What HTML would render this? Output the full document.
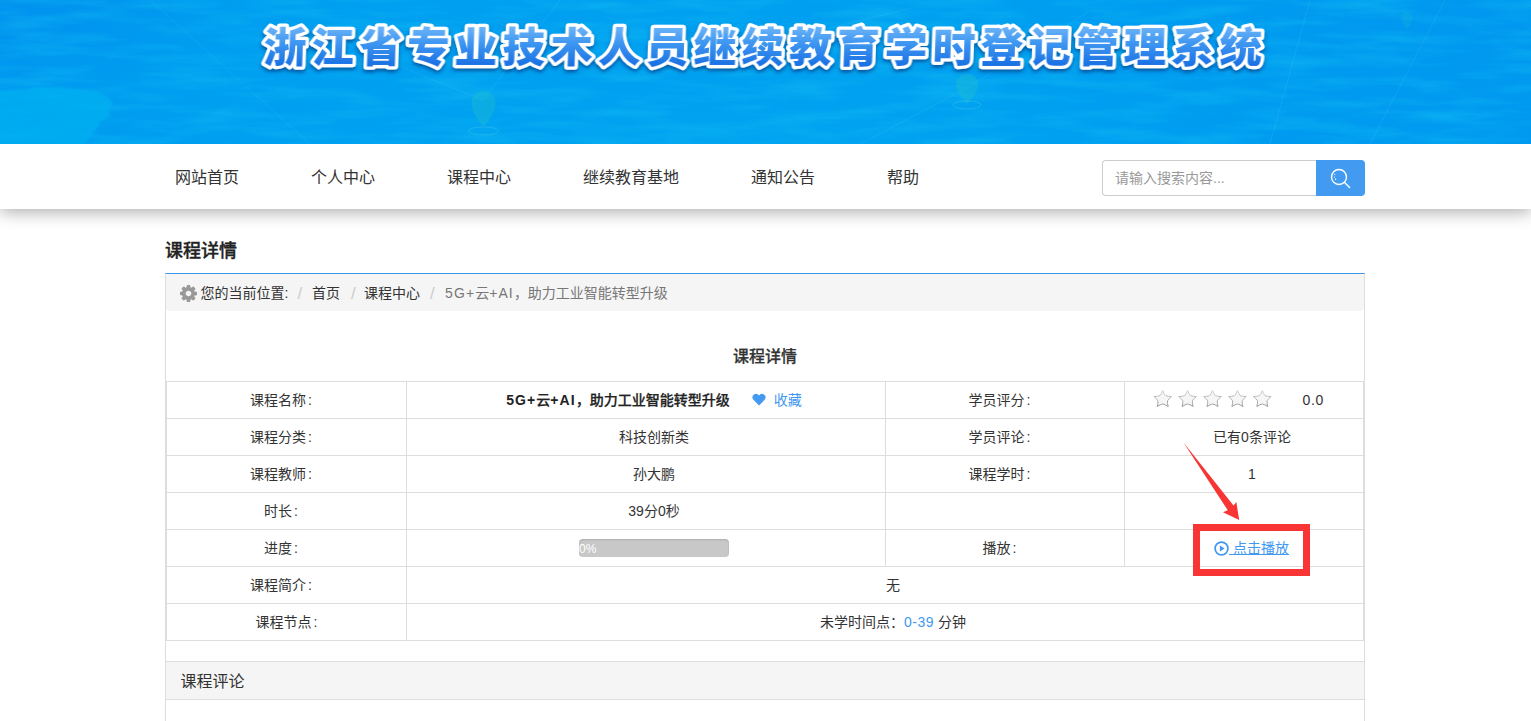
<!DOCTYPE html>
<html lang="zh-CN">
<head>
<meta charset="utf-8">
<title>课程详情</title>
<style>
*{box-sizing:border-box;margin:0;padding:0}
html,body{width:1531px;height:721px;overflow:hidden;background:#fff}
body{font-family:"Liberation Sans","Noto Sans CJK SC",sans-serif;font-size:14px;color:#333;position:relative}
.abs{position:absolute}
#banner{left:0;top:0;width:1531px;height:144px;overflow:hidden;
 background:
  radial-gradient(ellipse 520px 90px at 740px 150px,rgba(0,178,240,.3),rgba(0,178,240,0) 100%),
  radial-gradient(ellipse 300px 90px at 0px 0px,rgba(0,135,238,.45),rgba(0,135,238,0) 100%),
  radial-gradient(ellipse 420px 120px at 1531px 0px,rgba(0,140,238,.2),rgba(0,140,238,0) 100%),
  linear-gradient(90deg,#0099f0 0%,#009ff0 14%,#009ff0 60%,#009bf0 85%,#0099f0 100%);}
#banner svg{position:absolute;left:0;top:0}
#nav{left:0;top:144px;width:1531px;height:65px;background:#fff;box-shadow:0 3px 16px rgba(0,0,0,.33);clip-path:inset(0 0 -40px 0)}
#nav a{position:absolute;top:0;line-height:68px;font-size:16px;color:#333;text-decoration:none;white-space:nowrap}
#search{left:1102px;top:160px;width:215px;height:36px;border:1px solid #ccc;border-right:none;border-radius:4px 0 0 4px;background:#fff;
 font-size:14px;color:#999;line-height:35px;padding-left:12px}
#sbtn{left:1316px;top:160px;width:49px;height:36px;background:#429bf0;border-radius:0 4px 4px 0}
h1{left:165px;top:239px;font-size:18px;line-height:24px;font-weight:500;-webkit-text-stroke:.35px #222;color:#222}
#panel{left:165px;top:273px;width:1200px;height:460px;border:1px solid #ddd;border-top:1px solid #3a95e8}
#crumb{left:166px;top:274px;width:1198px;height:37px;background:#f5f5f5;border-radius:4px;font-size:14px;line-height:37px;color:#333;white-space:nowrap}
#crumb span{position:absolute;top:1px}
i.ls{font-style:normal;letter-spacing:1.1px}
td b{font-weight:500;-webkit-text-stroke:.25px #222}
td b i.ls{font-weight:700;-webkit-text-stroke:0}
#crumb .sep{color:#ccc;font-size:17px;top:1px}
h2{left:165px;top:345px;width:1200px;text-align:center;font-size:16px;line-height:24px;font-weight:500;-webkit-text-stroke:.25px #333;color:#333}
table{left:166px;top:381px;width:1197px;border-collapse:collapse;table-layout:fixed;font-size:14px}
td{border:1px solid #ddd;height:37px;text-align:center;vertical-align:middle;padding:0;line-height:20px;color:#333;white-space:nowrap}
td.l{padding-right:11px}
i.c{font-style:normal;margin-left:2px}
td.v{padding-left:16px}
.blue{color:#4098f0}
#cmt{left:166px;top:661px;width:1198px;height:39px;background:#f5f5f5;border-top:1px solid #ddd;border-bottom:1px solid #ddd;font-size:16px;line-height:40px;padding-left:14.5px;color:#333}
.bar{display:inline-block;position:relative;top:-1px;width:150px;height:18px;background:#c8c8c8;border-radius:4px;box-shadow:inset 0 1px 2px rgba(0,0,0,.14);vertical-align:middle;text-align:left;color:#fff;font-size:12px;line-height:21px;padding-left:0;overflow:hidden}
#redbox{left:1193px;top:524px;width:117px;height:52px;border:7px solid #f83434}
</style>
</head>
<body>
<div id="banner" class="abs">
<svg width="1531" height="144" viewBox="0 0 1531 144">
 <defs>
  <linearGradient id="tg" x1="0" y1="0" x2="0" y2="1">
   <stop offset="0" stop-color="#74b8f9"/>
   <stop offset="0.4" stop-color="#3f97f1"/>
   <stop offset="1" stop-color="#1268e0"/>
  </linearGradient>
  <filter id="sh" x="-5%" y="-20%" width="110%" height="150%">
   <feGaussianBlur in="SourceAlpha" stdDeviation="1.8" result="b"/>
   <feOffset in="b" dx="0" dy="3" result="o"/>
   <feFlood flood-color="#00357f" flood-opacity=".6"/>
   <feComposite in2="o" operator="in"/>
   <feMerge><feMergeNode/><feMergeNode in="SourceGraphic"/></feMerge>
  </filter>
 <filter id="wt" x="0" y="0" width="100%" height="100%" color-interpolation-filters="sRGB">
   <feTurbulence type="fractalNoise" baseFrequency="0.012 0.09" numOctaves="3" seed="7" result="n"/>
   <feColorMatrix type="matrix" values="0 0 0 0 0.08  0 0 0 0 0.76  0 0 0 0 0.95  1.8 0 0 0 -0.72"/>
  </filter>
  <filter id="lb" color-interpolation-filters="sRGB"><feGaussianBlur stdDeviation="1.2"/></filter>
 </defs>
 <rect x="0" y="0" width="1531" height="144" filter="url(#wt)" opacity=".5"/>
 <path filter="url(#lb)" d="M-10 92 L18 90 L40 87 L62 88 L80 90 L98 92 L108 97 L113 103 L108 110 L111 116 L100 122 L96 130 L90 138 L84 144 L80 160 L-10 160 Z" fill="#00b2f1" opacity=".7"/>
 <g stroke="#7fd4f8" stroke-width="1" opacity=".13" fill="none">
  <path d="M150 0 L310 144"/><path d="M286 20 L483 100"/><path d="M483 100 L560 0"/><path d="M967 88 L1088 12"/><path d="M967 88 L860 144"/><path d="M1310 0 L1270 144"/><path d="M1445 0 L1370 144"/><path d="M911 8 L700 60"/>
 </g>
 <g fill="#2fc9c0" opacity=".27">
  <path d="M483.5 91.0 c-7.4 0 -12.0 5.4 -12.0 12.0 c0 10.8 12.0 24.0 12.0 24.0 c0 0 12.0 -13.2 12.0 -24.0 c0 -6.6 -4.6 -12.0 -12.0 -12.0z"/>
  <path d="M967.0 74.0 c-6.8 0 -11.0 5.0 -11.0 11.0 c0 8.6 11.0 19.0 11.0 19.0 c0 0 11.0 -10.5 11.0 -19.0 c0 -6.1 -4.2 -11.0 -11.0 -11.0z"/>
  <path opacity=".6" d="M1407.0 12.0 c-3.4 0 -5.5 2.5 -5.5 5.5 c0 5.2 5.5 11.5 5.5 11.5 c0 0 5.5 -6.3 5.5 -11.5 c0 -3.0 -2.1 -5.5 -5.5 -5.5z"/>
 </g>
 <g fill="none" stroke="#5fd0f0" opacity=".3"><ellipse cx="483.500" cy="131" rx="15" ry="4"/><ellipse cx="967" cy="105" rx="14" ry="4"/></g>
 <g filter="url(#sh)" transform="skewX(-2) scale(1.04,1)">
  <text x="737.6" y="61.5" text-anchor="middle" font-family="'Liberation Sans','Noto Sans CJK SC',sans-serif" font-weight="900" font-size="41" letter-spacing="4.96" fill="#fff" stroke="#fff" stroke-width="6.5" stroke-linejoin="round">浙江省专业技术人员继续教育学时登记管理系统</text>
  <text x="737.6" y="61.5" text-anchor="middle" font-family="'Liberation Sans','Noto Sans CJK SC',sans-serif" font-weight="900" font-size="41" letter-spacing="4.96" fill="url(#tg)">浙江省专业技术人员继续教育学时登记管理系统</text>
 </g>
</svg>
</div>

<div id="nav" class="abs">
 <a style="left:175px">网站首页</a>
 <a style="left:311px">个人中心</a>
 <a style="left:447px">课程中心</a>
 <a style="left:583px">继续教育基地</a>
 <a style="left:751px">通知公告</a>
 <a style="left:887px">帮助</a>
</div>
<div id="search" class="abs">请输入搜索内容...</div>
<div id="sbtn" class="abs">
 <svg width="49" height="36" viewBox="0 0 49 36"><circle cx="23" cy="17" r="7.5" fill="none" stroke="#fff" stroke-width="1.4"/><path d="M28.3 22.3 L33.6 27.6" stroke="#fff" stroke-width="1.4" stroke-linecap="round" fill="none"/><circle cx="18.8" cy="14.6" r=".6" fill="#fff"/><circle cx="18.5" cy="17" r=".6" fill="#fff"/><circle cx="19.6" cy="19.3" r=".7" fill="#fff"/></svg>
</div>

<h1 class="abs">课程详情</h1>
<div id="panel" class="abs"></div>
<div id="crumb" class="abs">
 <svg class="abs" style="left:13.5px;top:10.5px" width="17" height="17" viewBox="0 0 1536 1536"><path fill="#999" d="M1024 768q0-106-75-181t-181-75-181 75-75 181 75 181 181 75 181-75 75-181zm512-109v222q0 12-8 23t-20 13l-185 28q-19 54-39 91 35 50 107 138 10 12 10 25t-9 23q-27 37-99 108t-94 71q-12 0-26-9l-138-108q-44 23-91 38-16 136-29 186-7 28-36 28h-222q-14 0-24.500-8.500t-11.500-21.500l-28-184q-49-16-90-37l-141 107q-10 9-25 9-14 0-25-11-126-114-165-168-7-10-7-23 0-12 8-23 15-21 51-66.500t54-70.500q-27-50-41-99l-183-27q-13-2-21-12.500t-8-23.500v-222q0-12 8-23t19-13l186-28q14-46 39-92-40-57-107-138-10-12-10-24 0-10 9-23 26-36 98.500-107.500t94.500-71.500q13 0 26 10l138 107q44-23 91-38 16-136 29-186 7-28 36-28h222q14 0 24.500 8.500t11.500 21.500l28 184q49 16 90 37l142-107q9-9 24-9 13 0 25 10 129 119 165 170 7 8 7 22 0 12-8 23-15 21-51 66.500t-54 70.500q26 50 41 98l183 28q13 2 21 12.500t8 23.500z"/></svg>
 <span style="left:34.5px">您的当前位置:</span>
 <span class="sep" style="left:131.500px">/</span>
 <span style="left:146px">首页</span>
 <span class="sep" style="left:185px">/</span>
 <span style="left:198px">课程中心</span>
 <span class="sep" style="left:264px">/</span>
 <span style="left:279px;color:#777"><i class="ls">5G+</i>云<i class="ls">+AI</i>，助力工业智能转型升级</span>
</div>
<h2 class="abs">课程详情</h2>

<table class="abs">
 <colgroup><col style="width:240px"><col style="width:479px"><col style="width:239px"><col style="width:239px"></colgroup>
 <tr><td class="l">课程名称<i class="c">:</i></td><td class="v"><b style="font-size:14px;color:#222"><i class="ls">5G+</i>云<i class="ls">+AI</i>，助力工业智能转型升级</b><span class="blue" style="margin-left:22px"><svg width="14" height="13" viewBox="0 0 14 13" style="vertical-align:-0.5px;margin-right:8px"><path fill="#4499f0" d="M7 12.5 L1.2 6.6 A3.3 3.3 0 0 1 7 2.4 A3.3 3.3 0 0 1 12.800 6.600 Z"/></svg>收藏</span></td><td class="l">学员评分<i class="c">:</i></td><td class="v"><span id="stars"></span></td></tr>
 <tr><td class="l">课程分类<i class="c">:</i></td><td class="v">科技创新类</td><td class="l">学员评论<i class="c">:</i></td><td class="v">已有0条评论</td></tr>
 <tr><td class="l">课程教师<i class="c">:</i></td><td class="v">孙大鹏</td><td class="l">课程学时<i class="c">:</i></td><td class="v">1</td></tr>
 <tr><td class="l">时长<i class="c">:</i></td><td class="v">39分0秒</td><td class="l"></td><td class="v"></td></tr>
 <tr><td class="l">进度<i class="c">:</i></td><td class="v"><span class="bar">0%</span></td><td class="l">播放<i class="c">:</i></td><td class="v"><a class="blue" style="text-decoration:underline;font-size:14px"><svg width="15" height="15" viewBox="0 0 15 15" style="vertical-align:-2.5px;margin-left:-1px"><circle cx="7.500" cy="7.500" r="6.400" fill="none" stroke="#4098f0" stroke-width="1.700"/><path d="M5.900 4.600 L10.600 7.500 L5.900 10.400 Z" fill="#4098f0"/></svg> 点击播放</a></td></tr>
 <tr><td class="l">课程简介<i class="c">:</i></td><td class="v" colspan="3">无</td></tr>
 <tr><td class="l" style="padding-right:0">课程节点<i class="c">:</i></td><td class="v" colspan="3">未学时间点：<span class="blue" style="font-size:14px;letter-spacing:.5px">0-39</span> 分钟</td></tr>
</table>

<svg class="abs" style="left:1152.5px;top:389.5px" width="122" height="19" viewBox="0 0 122 19"><defs><linearGradient id="sg" x1="0" y1="0" x2="0" y2="1"><stop offset="0" stop-color="#d4d4d4"/><stop offset="1" stop-color="#9a9a9a"/></linearGradient></defs>
 <path transform="translate(0.0,0)" d="M9.7 0.5 Q10.9 3.8 12.4 5.6 Q14.8 6.5 18.6 6.5 Q15.7 8.7 14.5 10.8 Q14.2 13.1 15.2 16.5 Q12.1 14.5 9.7 13.9 Q7.3 14.5 4.2 16.5 Q5.2 13.1 4.9 10.8 Q3.7 8.7 0.8 6.5 Q4.6 6.5 7.0 5.6 Q8.5 3.8 9.7 0.5 Z" fill="#f6f6f6" stroke="url(#sg)" stroke-width="1" stroke-linejoin="round"/>
 <path transform="translate(24.9,0)" d="M9.7 0.5 Q10.9 3.8 12.4 5.6 Q14.8 6.5 18.6 6.5 Q15.7 8.7 14.5 10.8 Q14.2 13.1 15.2 16.5 Q12.1 14.5 9.7 13.9 Q7.3 14.5 4.2 16.5 Q5.2 13.1 4.9 10.8 Q3.7 8.7 0.8 6.5 Q4.6 6.5 7.0 5.6 Q8.5 3.8 9.7 0.5 Z" fill="#f6f6f6" stroke="url(#sg)" stroke-width="1" stroke-linejoin="round"/>
 <path transform="translate(49.8,0)" d="M9.7 0.5 Q10.9 3.8 12.4 5.6 Q14.8 6.5 18.6 6.5 Q15.7 8.7 14.5 10.8 Q14.2 13.1 15.2 16.5 Q12.1 14.5 9.7 13.9 Q7.3 14.5 4.2 16.5 Q5.2 13.1 4.9 10.8 Q3.7 8.7 0.8 6.5 Q4.6 6.5 7.0 5.6 Q8.5 3.8 9.7 0.5 Z" fill="#f6f6f6" stroke="url(#sg)" stroke-width="1" stroke-linejoin="round"/>
 <path transform="translate(74.7,0)" d="M9.7 0.5 Q10.9 3.8 12.4 5.6 Q14.8 6.5 18.6 6.5 Q15.7 8.7 14.5 10.8 Q14.2 13.1 15.2 16.5 Q12.1 14.5 9.7 13.9 Q7.3 14.5 4.2 16.5 Q5.2 13.1 4.9 10.8 Q3.7 8.7 0.8 6.5 Q4.6 6.5 7.0 5.6 Q8.5 3.8 9.7 0.5 Z" fill="#f6f6f6" stroke="url(#sg)" stroke-width="1" stroke-linejoin="round"/>
 <path transform="translate(99.6,0)" d="M9.7 0.5 Q10.9 3.8 12.4 5.6 Q14.8 6.5 18.6 6.5 Q15.7 8.7 14.5 10.8 Q14.2 13.1 15.2 16.5 Q12.1 14.5 9.7 13.9 Q7.3 14.5 4.2 16.5 Q5.2 13.1 4.9 10.8 Q3.7 8.7 0.8 6.5 Q4.6 6.5 7.0 5.6 Q8.5 3.8 9.7 0.5 Z" fill="#f6f6f6" stroke="url(#sg)" stroke-width="1" stroke-linejoin="round"/>
</svg>
<div class="abs" style="left:1302.500px;top:390px;font-size:14px;line-height:20px;color:#333;letter-spacing:.6px">0.0</div>
<div id="cmt" class="abs">课程评论</div>

<svg class="abs" style="left:1170px;top:430px" width="90" height="100" viewBox="1170 430 90 100"><path fill="#f83434" d="M1183.300 442.200 L1233.500 505.500 L1236.300 502 L1239.200 520 L1223 512.200 L1227.800 510.300 Z"/></svg>
<div id="redbox" class="abs"></div>
</body>
</html>
